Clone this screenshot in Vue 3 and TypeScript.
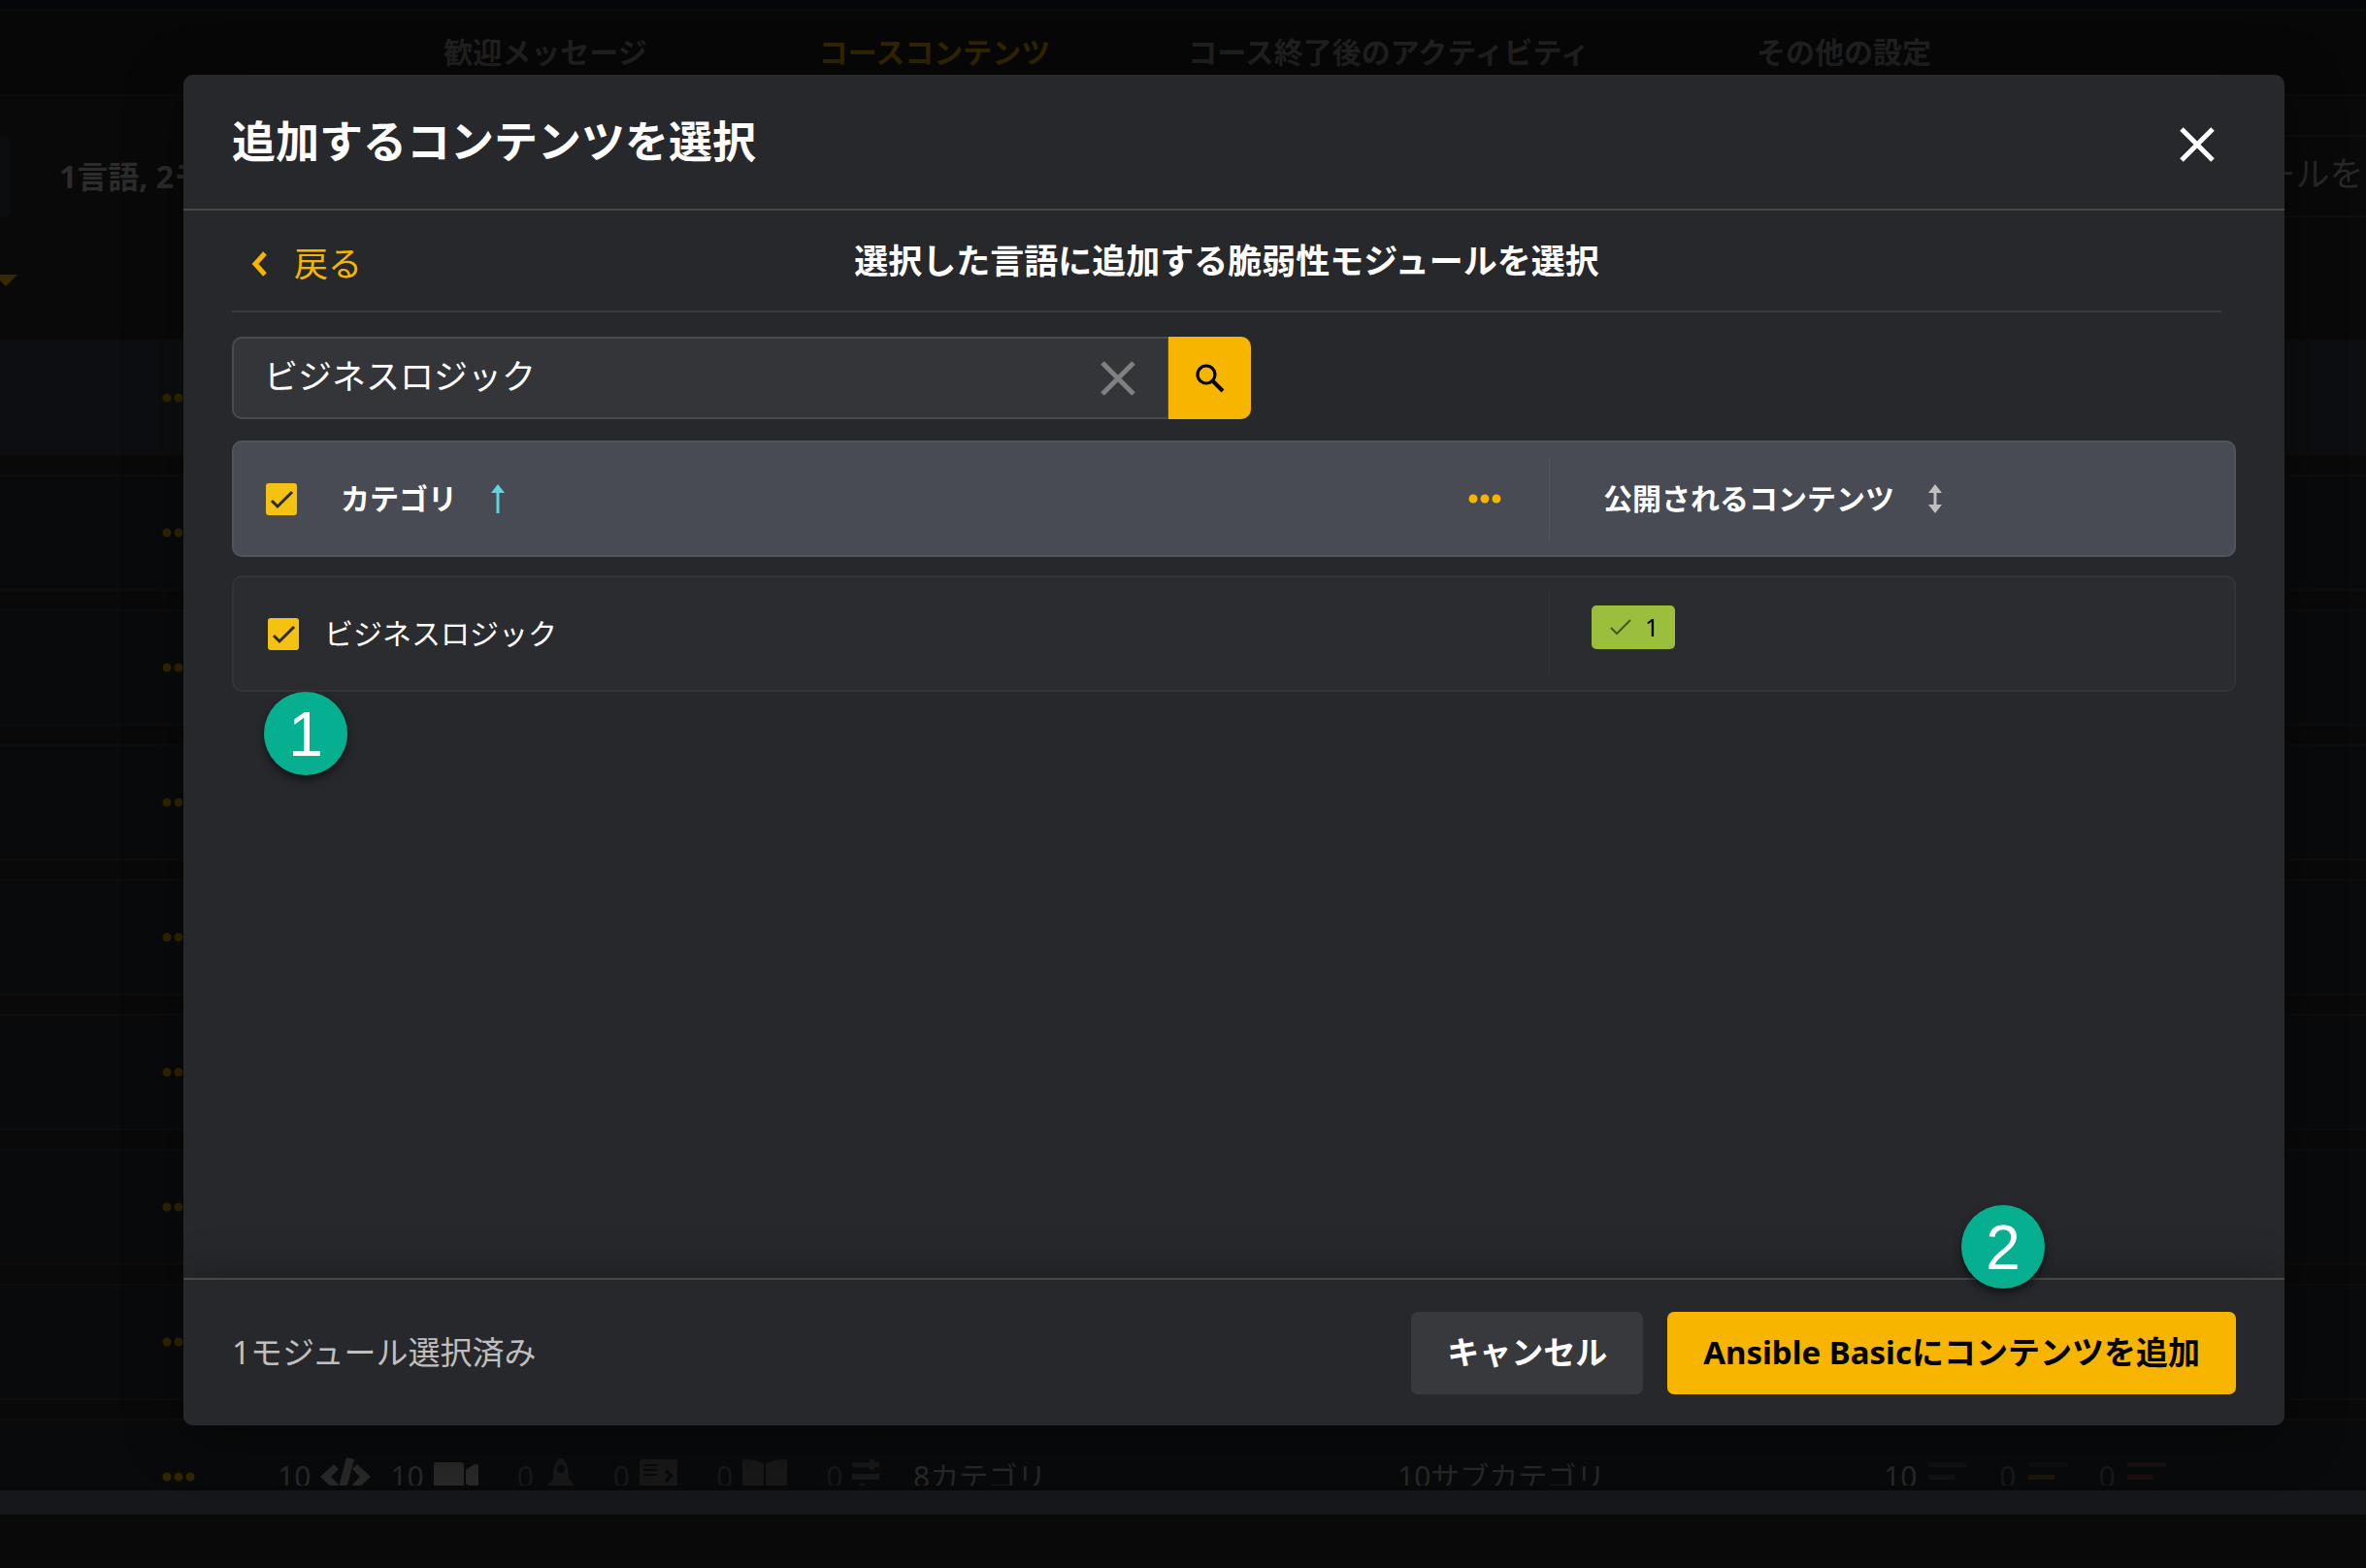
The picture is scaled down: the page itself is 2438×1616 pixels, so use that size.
<script setup lang="ts">
import { ref } from 'vue'

interface Tab {
  label: string
  active?: boolean
}

const tabs: Tab[] = [
  { label: '歓迎メッセージ' },
  { label: 'コースコンテンツ', active: true },
  { label: 'コース終了後のアクティビティ' },
  { label: 'その他の設定' },
]

const hiddenRows = 8
const query = ref('ビジネスロジック')
const allSelected = ref(true)
const moduleSelected = ref(true)
</script>

<template>
  <div class="app">
    <div class="page" aria-hidden="true">
      <div class="topline"></div>
      <nav class="tabs">
        <a v-for="tab in tabs" :key="tab.label" href="#" :class="{ active: tab.active }">{{ tab.label }}</a>
      </nav>
      <div class="toolbar">
        <span class="stub"></span>
        <strong class="summary">1言語, 2モ</strong>
        <span class="page-search">モジュールを</span>
      </div>
      <div class="filter">
        <svg width="18" height="12" viewBox="0 0 18 12"><path d="M-6 0H18L6 12Z" fill="currentColor" /></svg>
      </div>
      <div class="list">
        <div v-for="n in hiddenRows" :key="n" class="item" :class="{ head: n === 1 }">
          <span class="cell menu">
            <svg width="34" height="10" viewBox="0 0 34 10" fill="currentColor"><circle cx="5" cy="5" r="4.5" /><circle cx="17" cy="5" r="4.5" /><circle cx="29" cy="5" r="4.5" /></svg>
          </span>
        </div>
        <div class="item">
          <span class="cell menu">
            <svg width="34" height="10" viewBox="0 0 34 10" fill="currentColor"><circle cx="5" cy="5" r="4.5" /><circle cx="17" cy="5" r="4.5" /><circle cx="29" cy="5" r="4.5" /></svg>
          </span>
          <span class="cell counts">
            <span class="count">10
              <svg width="52" height="44" viewBox="0 0 52 44" fill="currentColor"><path d="M27 2L35 4L25 42L17 40ZM14 9L19 14L11 22L19 30L14 35L0 22ZM38 9L52 22L38 35L33 30L41 22L33 14Z" /></svg>
            </span>
            <span class="count">10
              <svg width="46" height="44" viewBox="0 0 46 44" fill="currentColor"><rect y="7" width="31" height="30" rx="3" /><path d="M33 15L42 9Q46 8 46 12V32Q46 36 42 35L33 29Z" /></svg>
            </span>
            <span class="count dim">0
              <svg width="32" height="44" viewBox="-4 0 32 44" fill="currentColor"><path fill-rule="evenodd" d="M14 2C20 6 22 14 22 20V24L28 31V40H0V31L6 24V20C6 14 8 6 14 2ZM14 10A4 4 0 1 0 14 18A4 4 0 1 0 14 10Z" /></svg>
            </span>
            <span class="count dim">0
              <svg width="39" height="44" viewBox="0 0 39 44" fill="currentColor"><path fill-rule="evenodd" d="M3 4H39V40H0V7Q0 4 3 4ZM4 9V11H18V9ZM4 14V16H18V14ZM4 19V21H18V19ZM28 14L26 17L30 21L26 25L28 28L35 21Z" /></svg>
            </span>
            <span class="count dim">0
              <svg width="46" height="44" viewBox="0 0 46 44" fill="currentColor"><path d="M0 6Q0 4 3 4Q14 4 22 9V40Q12 35 0 37ZM46 6Q46 4 43 4Q32 4 24 9V40Q34 35 46 37Z" /></svg>
            </span>
            <span class="count dim">0
              <svg width="46" height="44" viewBox="0 0 46 44" fill="currentColor"><path d="M0 7H18V4H23V7H42V12H23V15H18V12H0ZM0 19H42V25H0ZM8 29H13V32H42V37H13V40H8V37H0V32H8Z" /></svg>
            </span>
          </span>
          <span class="cell text">8カテゴリ</span>
          <span class="cell text">10サブカテゴリ</span>
          <span class="cell levels">
            <span class="level">10 <svg width="40" height="30" viewBox="0 0 40 30"><path d="M0 0H40V5H0Z" fill="#111112" /><path d="M0 13H27V18H0Z" fill="#101216" /></svg></span>
            <span class="level dim">0 <svg width="40" height="30" viewBox="0 0 40 30"><path d="M0 0H40V5H0Z" fill="#0f0f0f" /><path d="M0 13H27V18H0Z" fill="#1c170d" /></svg></span>
            <span class="level dim">0 <svg width="40" height="30" viewBox="0 0 40 30"><path d="M0 0H40V5H0Z" fill="#1b0f11" /><path d="M0 13H27V18H0Z" fill="#1b0f11" /></svg></span>
          </span>
          <span class="cell"></span>
        </div>
      </div>
      <div class="scrollbar"></div>
    </div>

    <section class="modal" role="dialog" aria-modal="true" aria-labelledby="dialog-title">
      <header class="modal-head">
        <h1 id="dialog-title">追加するコンテンツを選択</h1>
        <button type="button" class="icon-button" aria-label="閉じる">
          <svg width="36" height="36" viewBox="0 0 36 36" stroke="#fff" stroke-width="5"><path d="M2 2L34 34M34 2L2 34" /></svg>
        </button>
      </header>

      <div class="modal-body">
        <div class="step">
          <button type="button" class="back">
            <svg width="18" height="26" viewBox="0 0 18 26" fill="none" stroke="currentColor" stroke-width="5"><path d="M15 2L5 13L15 24" /></svg>
            戻る
          </button>
          <h2>選択した言語に追加する脆弱性モジュールを選択</h2>
        </div>

        <form class="search" role="search" @submit.prevent>
          <div class="field">
            <input v-model="query" type="text" aria-label="モジュールを検索" />
            <button type="button" class="icon-button" aria-label="クリア" @click="query = ''">
              <svg width="36" height="36" viewBox="0 0 36 36" stroke="#808081" stroke-width="5"><path d="M2 2L34 34M34 2L2 34" /></svg>
            </button>
          </div>
          <button type="submit" class="go" aria-label="検索">
            <svg width="30" height="30" viewBox="0 0 30 30" fill="none" stroke="#000"><circle cx="11" cy="11" r="9" stroke-width="3.2" /><path d="M17 17L28 28" stroke-width="4" /></svg>
          </button>
        </form>

        <table>
          <colgroup><col /><col class="published" /></colgroup>
          <thead>
            <tr>
              <th scope="col">
                <div class="inner">
                  <label class="check">
                    <input v-model="allSelected" type="checkbox" aria-label="すべて選択" />
                    <svg v-if="allSelected" width="32" height="32" viewBox="0 0 32 32" fill="none" stroke="#2b2c2f" stroke-width="3"><path d="M6 18L12 24L27 9" /></svg>
                  </label>
                  <span>カテゴリ</span>
                  <svg class="sort" width="14" height="30" viewBox="0 0 14 30" fill="#5cd6e0"><path d="M7 0L14 9H8.500V30H5.500V9H0Z" /></svg>
                  <button type="button" class="icon-button more" aria-label="メニュー">
                    <svg width="34" height="10" viewBox="0 0 34 10" fill="#f7b500"><circle cx="5" cy="5" r="4.500" /><circle cx="17" cy="5" r="4.500" /><circle cx="29" cy="5" r="4.500" /></svg>
                  </button>
                </div>
              </th>
              <th scope="col">
                <div class="inner">
                  <span>公開されるコンテンツ</span>
                  <svg class="sort" width="14" height="30" viewBox="0 0 14 30" fill="#bfbfbf"><path d="M7 0L14 9H8.500V21H14L7 30L0 21H5.500V9H0Z" /></svg>
                </div>
              </th>
            </tr>
          </thead>
          <tbody>
            <tr>
              <td>
                <label class="inner">
                  <span class="check">
                    <input v-model="moduleSelected" type="checkbox" />
                    <svg v-if="moduleSelected" width="32" height="32" viewBox="0 0 32 32" fill="none" stroke="#2b2c2f" stroke-width="3"><path d="M6 18L12 24L27 9" /></svg>
                  </span>
                  <span>ビジネスロジック</span>
                </label>
              </td>
              <td class="badge-cell">
                <span class="badge">
                  <svg width="22" height="18" viewBox="0 0 22 18" fill="none" stroke="#47561f" stroke-width="2"><path d="M1 10L7 16L21 2" /></svg>
                  1
                </span>
              </td>
            </tr>
          </tbody>
        </table>
      </div>

      <footer class="modal-foot">
        <p>1モジュール選択済み</p>
        <button type="button" class="button">キャンセル</button>
        <button type="button" class="button primary">Ansible Basicにコンテンツを追加</button>
      </footer>

      <span class="callout first">1</span>
      <span class="callout second">2</span>
    </section>
  </div>
</template>

<style>
body {
  background: #090909;
}
</style>

<style scoped>
* {
  box-sizing: border-box;
}

.app {
  position: relative;
  height: 100vh;
  overflow: hidden;
  font-family: "Noto Sans", "Noto Sans CJK JP", sans-serif;
  font-size: 30px;
  line-height: 44px;
}

h1, h2, p {
  margin: 0;
}

button, input {
  font: inherit;
  color: inherit;
  margin: 0;
  padding: 0;
  border: 0;
  background: none;
}

svg {
  display: block;
  flex: none;
}

/* Dimmed course page behind the dialog */
.page {
  display: flex;
  flex-direction: column;
  height: 100%;
  padding-bottom: 55px;
  background: #090909;
  color: #282828;
  white-space: nowrap;
}

.topline {
  height: 11px;
  border-bottom: 2px solid #0b0b0d;
  background: #05060a;
}

.tabs {
  display: grid;
  grid-template-columns: 396fr 406fr 530fr 408fr;
  align-items: center;
  justify-items: center;
  height: 88px;
  padding: 0 334px 0 364px;
  border-bottom: 2px solid #0c0c0d;
  background: #070707;
  font-weight: 700;
}

.tabs a {
  color: #202020;
  text-decoration: none;
}

.tabs a.active {
  color: #322500;
}

.toolbar {
  display: flex;
  align-items: center;
  height: 165px;
  font-size: 32px;
}

.stub {
  width: 11px;
  height: 85px;
  border-radius: 0 8px 8px 0;
  background: #0c0d0f;
}

.summary {
  margin-left: 50px;
  color: #2c2c2c;
}

.page-search {
  width: 300px;
  height: 85px;
  margin-left: auto;
  padding: 16px 0 0 90px;
  border: solid #0e0f11;
  border-width: 2px 0;
  font-size: 35px;
  overflow: hidden;
}

.filter {
  height: 86px;
  padding-top: 19px;
  color: #382a00;
}

.list {
  display: flex;
  flex: 1;
  flex-direction: column;
  gap: 19px;
  min-height: 0;
  overflow: hidden;
}

.item {
  display: grid;
  flex: none;
  grid-template-columns: 250px 656px 499fr 500fr 500fr 33fr;
  height: 120px;
  border: solid #0d0d0e;
  border-width: 2px 0;
  background: #090a0b;
}

.item.head {
  background: #0d0e11;
}

.cell {
  display: flex;
  align-items: center;
  overflow: hidden;
}

.cell + .cell {
  border-left: 1px solid #0c0c0d;
}

.menu {
  justify-content: flex-end;
  padding-right: 49px;
  color: #322500;
}

.counts {
  gap: 20px;
  padding-left: 35px;
}

.count, .level {
  display: flex;
  flex: none;
  align-items: center;
  gap: 10px;
}

.dim {
  color: #181818;
}

.count.dim {
  margin-left: 20px;
}

.text {
  padding-left: 34px;
}

.levels {
  gap: 33px;
  padding-left: 35px;
}

.level {
  gap: 12px;
}

.scrollbar {
  height: 30px;
  border-top: 5px solid #08090a;
  background: #16171a;
}

/* Dialog */
.modal {
  position: absolute;
  inset: 77px 84px 147px 189px;
  display: flex;
  flex-direction: column;
  border-radius: 10px;
  background: #27282c;
  color: #fff;
  box-shadow: 0 10px 60px rgba(0, 0, 0, 0.4);
  overflow: hidden;
}

.modal-head {
  display: flex;
  align-items: center;
  justify-content: space-between;
  height: 140px;
  padding: 0 72px 0 50px;
  border-bottom: 2px solid #484844;
}

.modal-head .icon-button {
  padding-top: 5px;
}

h1 {
  font-size: 45px;
  line-height: 60px;
}

.icon-button {
  display: block;
  cursor: pointer;
}

.modal-body {
  flex: 1;
  min-height: 0;
  padding: 0 50px;
}

.step {
  display: grid;
  grid-template-columns: 1fr auto 1fr;
  align-items: center;
  height: 105px;
  margin-right: 15px;
  border-bottom: 2px solid #3a3b41;
}

.back {
  display: flex;
  align-items: center;
  justify-self: start;
  gap: 27px;
  padding: 6px 0 0 19px;
  color: #f7b500;
  font-size: 35px;
}

h2 {
  font-size: 35px;
  line-height: 44px;
}

.search {
  display: flex;
  width: 1050px;
  max-width: 100%;
  height: 85px;
  margin-top: 25px;
}

.field {
  display: flex;
  flex: 1;
  align-items: center;
  padding: 0 33px 0 31px;
  border: 2px solid #484c52;
  border-right-width: 1px;
  border-radius: 10px 0 0 10px;
  background: #343538;
}

.field input {
  flex: 1;
  min-width: 0;
  height: 100%;
  padding-bottom: 8px;
  outline: 0;
  font-size: 35px;
}

.go {
  display: grid;
  place-items: center;
  width: 85px;
  border-radius: 0 10px 10px 0;
  background: #f7b500;
}

table {
  width: 100%;
  margin-top: 3px;
  border-spacing: 0 19px;
  table-layout: fixed;
  text-align: left;
}

.published {
  width: 708px;
}

th, td {
  position: relative;
  height: 120px;
  padding: 0;
  border: solid #333438;
  border-width: 2px 0;
  background: #2b2c2f;
}

th {
  border-color: #4f565c;
  background: #484b53;
}

th:first-child, td:first-child {
  border-left-width: 2px;
  border-radius: 10px 0 0 10px;
}

th:last-child, td:last-child {
  border-right-width: 2px;
  border-radius: 0 10px 10px 0;
}

th:last-child::before, td:last-child::before {
  position: absolute;
  top: 15px;
  bottom: 15px;
  left: 0;
  width: 1px;
  background: #333438;
  content: "";
}

th:last-child::before {
  background: #4f565c;
}

.inner {
  display: flex;
  align-items: center;
  gap: 26px;
  padding-left: 35px;
}

th .inner {
  gap: 35px;
  padding: 0 49px 0 33px;
}

th .check {
  margin-right: 10px;
}

th:last-child .inner {
  padding-left: 56px;
}

.more {
  margin-left: auto;
}

.check {
  display: grid;
  flex: none;
}

.check input, .check svg {
  grid-area: 1 / 1;
}

.check input {
  width: 32px;
  height: 33px;
  border-radius: 3px;
  background: #f5c211;
  appearance: none;
}

.badge-cell {
  padding: 27px 0 0 44px;
  vertical-align: top;
}

.badge {
  display: inline-flex;
  align-items: center;
  gap: 14px;
  height: 45px;
  padding: 0 17px 0 19px;
  border-radius: 5px;
  background: #9bbf3c;
  color: #000;
  font-size: 25px;
}

.modal-foot {
  display: flex;
  align-items: center;
  gap: 25px;
  height: 152px;
  padding: 0 50px;
  border-top: 2px solid #484844;
  background: #27282c;
  box-shadow: 0 0 45px rgba(0, 0, 0, 0.3);
  font-size: 33px;
}

.modal-foot p {
  margin-right: auto;
  color: #bfbfbf;
}

.button {
  height: 85px;
  padding: 0 37px;
  border-radius: 7px;
  background: #38393c;
  font-weight: 700;
}

.button.primary {
  background: #f7b500;
  color: #000;
}

/* Numbered step markers drawn over the dialog */
.callout {
  position: absolute;
  width: 86px;
  height: 86px;
  border-radius: 50%;
  background: #07af91;
  box-shadow: 0 5px 8px rgba(0, 0, 0, 0.5);
  font-family: "Liberation Sans", Arial, sans-serif;
  font-size: 64px;
  line-height: 88px;
  text-align: center;
}

.first {
  top: 636px;
  left: 83px;
}

.second {
  right: 247px;
  bottom: 141px;
}
</style>
